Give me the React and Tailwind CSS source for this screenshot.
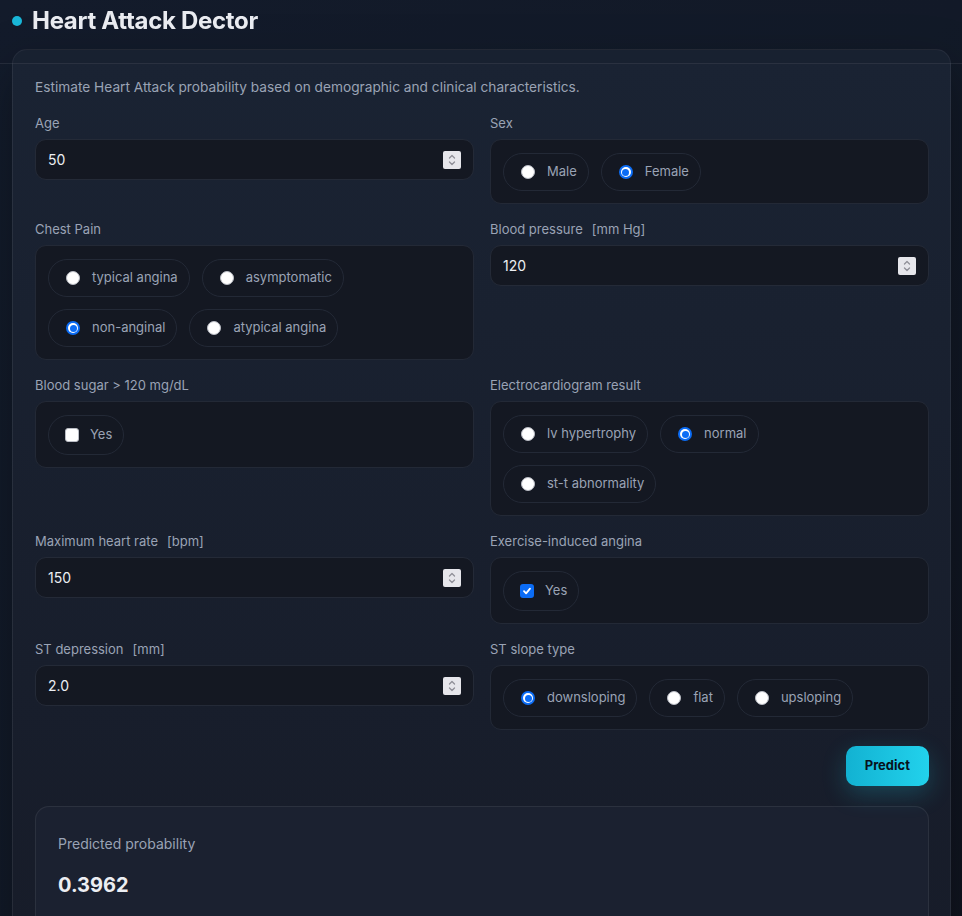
import React from "react";

const FONT = { fontFamily: "Inter, 'Noto Sans', 'Liberation Sans', sans-serif" };

function Spinner() {
  return (
    <span className="flex h-[18px] w-[18px] flex-col items-center justify-center rounded-[2px] bg-[#e6e6eb]">
      <svg width="10" height="14" viewBox="0 0 10 14" fill="none" stroke="#8f8f98" strokeWidth="1.3" strokeLinecap="round" strokeLinejoin="round">
        <path d="M2.5 5 L5 2.5 L7.5 5" />
        <path d="M2.5 9 L5 11.5 L7.5 9" />
      </svg>
    </span>
  );
}

function NumberField({ value }) {
  return (
    <div className="flex h-[41px] items-center justify-between rounded-[11px] border border-[#242a37] bg-[#141822] pl-3 pr-3">
      <span className="text-[14px] text-[#eceef2]">{value}</span>
      <Spinner />
    </div>
  );
}

function Radio({ checked }) {
  if (checked) {
    return (
      <span className="flex h-[14px] w-[14px] items-center justify-center rounded-full bg-[#0b6cf5]">
        <span className="flex h-[10px] w-[10px] items-center justify-center rounded-full bg-white">
          <span className="h-[7px] w-[7px] rounded-full bg-[#0b6cf5]" />
        </span>
      </span>
    );
  }
  return <span className="h-[14px] w-[14px] rounded-full border border-[#b9bcc4] bg-white" />;
}

function Check({ checked }) {
  if (checked) {
    return (
      <span className="flex h-[14px] w-[14px] items-center justify-center rounded-[3px] bg-[#0b6cf5]">
        <svg width="10" height="10" viewBox="0 0 10 10" fill="none" stroke="white" strokeWidth="1.8" strokeLinecap="round" strokeLinejoin="round">
          <path d="M2 5.2 L4.1 7.3 L8 2.7" />
        </svg>
      </span>
    );
  }
  return <span className="h-[14px] w-[14px] rounded-[3px] border border-[#b9bcc4] bg-white" />;
}

function RadioPill({ label, checked }) {
  return (
    <div className="flex h-[38px] items-center gap-3 rounded-full border border-[#232936] pl-[17px] pr-[11px]">
      <Radio checked={checked} />
      <span className="text-[13px] text-[#9aa3b5]">{label}</span>
    </div>
  );
}

function CheckPill({ checked }) {
  return (
    <div className="flex h-[40px] items-center gap-[11px] rounded-full border border-[#232936] pl-4 pr-[11px]">
      <Check checked={checked} />
      <span className="text-[13px] text-[#9aa3b5]">Yes</span>
    </div>
  );
}

function Group({ children }) {
  return (
    <div className="flex flex-wrap gap-3 rounded-[11px] border border-[#232936] bg-[#141822] px-3 pt-[13px] pb-3">
      {children}
    </div>
  );
}

function Field({ label, unit, children }) {
  return (
    <div className="flex flex-col">
      <div className="mb-2 flex h-4 items-center text-[13px] leading-4 text-[#9aa3b5]">
        <span>{label}</span>
        {unit && <span className="ml-[9px]">{unit}</span>}
      </div>
      {children}
    </div>
  );
}

export default function App() {
  return (
    <div
      style={FONT}
      className="relative min-h-screen bg-gradient-to-br from-[#131c2c] via-[#121a28] to-[#10141f] pb-10"
    >
      <header className="fixed inset-x-0 top-0 z-10 h-[64px] border-b border-white/[0.08] bg-[#131b2a]/20">
        <div className="flex items-center gap-[10px] pl-[12px] pt-[5px]">
          <span className="h-[10px] w-[10px] rounded-full bg-[#19b6d8]" />
          <h1 className="text-[24px] font-bold leading-8 tracking-[-0.3px] text-[#e9ebf0]">Heart Attack Dector</h1>
        </div>
      </header>

      <div className="pt-[49px] pl-3 pr-[11px]">
        <div className="rounded-[15px] border border-white/[0.07] bg-gradient-to-b from-[#1a2333] to-[#171c29] pl-[22px] pr-[21px] pt-[27px] pb-6 shadow-[0_20px_50px_rgba(0,0,0,0.35)]">
          <p className="mb-[18px] text-[13.7px] leading-5 text-[#9aa3b5]">
            Estimate Heart Attack probability based on demographic and clinical characteristics.
          </p>

          <div className="grid grid-cols-2 items-start gap-x-4 gap-y-[17px]">
            <Field label="Age">
              <NumberField value="50" />
            </Field>
            <Field label="Sex">
              <Group>
                <RadioPill label="Male" />
                <RadioPill label="Female" checked />
              </Group>
            </Field>

            <Field label="Chest Pain">
              <Group>
                <RadioPill label="typical angina" />
                <RadioPill label="asymptomatic" />
                <RadioPill label="non-anginal" checked />
                <RadioPill label="atypical angina" />
              </Group>
            </Field>
            <Field label="Blood pressure" unit="[mm Hg]">
              <NumberField value="120" />
            </Field>

            <Field label="Blood sugar > 120 mg/dL">
              <Group>
                <CheckPill />
              </Group>
            </Field>
            <Field label="Electrocardiogram result">
              <Group>
                <RadioPill label="lv hypertrophy" />
                <RadioPill label="normal" checked />
                <RadioPill label="st-t abnormality" />
              </Group>
            </Field>

            <Field label="Maximum heart rate" unit="[bpm]">
              <NumberField value="150" />
            </Field>
            <Field label="Exercise-induced angina">
              <Group>
                <CheckPill checked />
              </Group>
            </Field>

            <Field label="ST depression" unit="[mm]">
              <NumberField value="2.0" />
            </Field>
            <Field label="ST slope type">
              <Group>
                <RadioPill label="downsloping" checked />
                <RadioPill label="flat" />
                <RadioPill label="upsloping" />
              </Group>
            </Field>
          </div>

          <div className="mt-4 flex justify-end">
            <button className="h-10 rounded-[10px] bg-gradient-to-r from-[#12b2d2] to-[#22d2ec] px-[19px] text-[13px] font-bold text-[#08121c] shadow-[0_8px_24px_rgba(34,211,238,0.22)]">
              Predict
            </button>
          </div>

          <div className="mt-5 rounded-[14px] border border-white/[0.07] bg-[#1b2130] px-[22px] pt-[27px] pb-[30px]">
            <div className="text-[14px] leading-5 text-[#9aa3b5]">Predicted probability</div>
            <div className="mt-[17px] text-[20px] font-bold leading-7 text-[#eceef2]">0.3962</div>
          </div>
        </div>
      </div>
    </div>
  );
}
